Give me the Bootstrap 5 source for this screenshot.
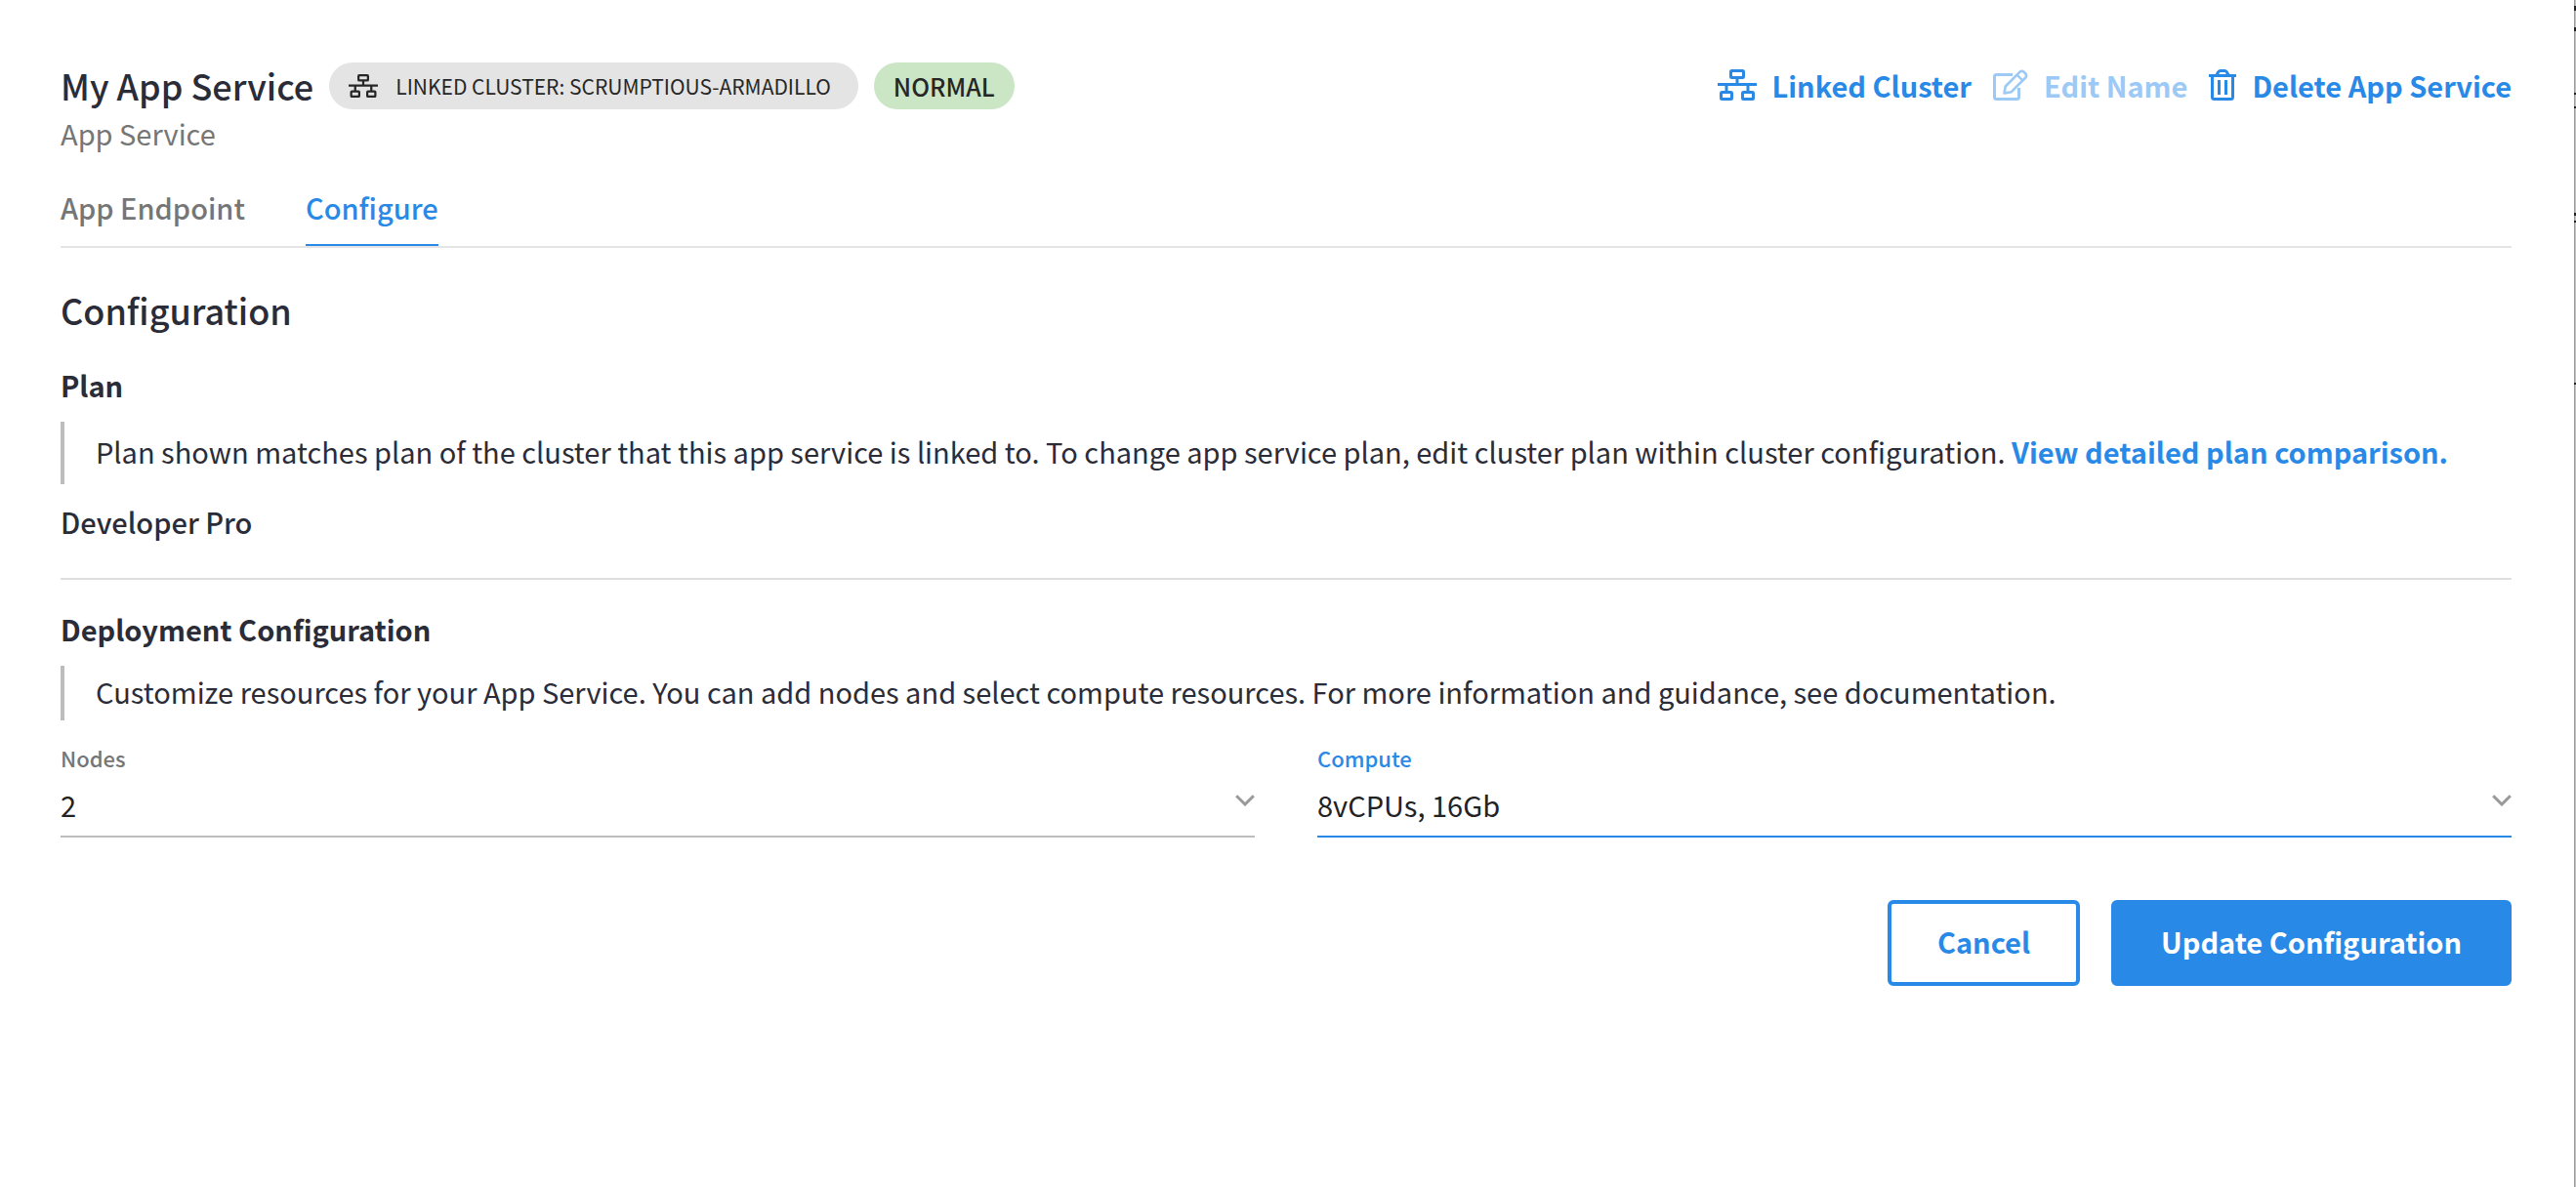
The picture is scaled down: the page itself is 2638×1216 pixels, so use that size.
<!DOCTYPE html>
<html lang="en">
<head>
<meta charset="utf-8">
<meta name="viewport" content="width=device-width, initial-scale=1">
<title>My App Service – Configure</title>
<link href="https://cdn.jsdelivr.net/npm/bootstrap@5.3.0/dist/css/bootstrap.min.css" rel="stylesheet">
<style>
  :root { --brand: #2989e6; --ink: #2a2c38; --muted: #767676; --rule: #e4e4e4; --line: #bdbdbd; }
  body { font-family: "Noto Sans CJK SC", "Noto Sans", sans-serif; font-size: 29px; line-height: 40px; color: var(--ink); background: #fff; }
  .page-body { padding: 64px 64px 64px 62px; }
  /* sliver of the next panel along the window's right side */
  .edge-strip { width: 2px; background: linear-gradient(#222, #222) 0 6px / 2px 5px, linear-gradient(#222, #222) 0 28px / 2px 4px,
      linear-gradient(#222, #222) 0 95px / 2px 2px, linear-gradient(#222, #222) 0 109px / 2px 2px,
      linear-gradient(#222, #222) 0 218px / 2px 3px, linear-gradient(#222, #222) 0 226px / 2px 2px,
      linear-gradient(#222, #222) 0 392px / 2px 2px, linear-gradient(90deg, #9a9a9a 50%, #c4c4c4 50%);
      background-repeat: no-repeat; }
  .page-title, .section-title { font-size: 36px; font-weight: 500; line-height: 46px; margin: 0; }
  .section-title { margin: 40px 0 34px; }
  .tag { height: 48px; border-radius: 24px; color: #262626; }
  .tag-cluster { background: #e4e4e4; font-size: 21px; gap: 18px; margin-left: 16px; padding: 0 28px 0 20px; }
  .tag-status { background: #cae6c5; font-size: 25px; font-weight: 500; margin-left: 16px; padding: 0 20px; }
  .subtitle { line-height: 48px; color: var(--muted); }
  .action-bar { gap: 22px; }
  .action-link { display: flex; align-items: center; gap: 16px; line-height: 46px; font-weight: 700; color: var(--brand); background: none; border: 0; padding: 0; text-decoration: none; }
  .action-link:disabled { color: #9cc9f5; }
  .tab-row { gap: 62px; margin-top: 28px; border-bottom: 2px solid var(--rule); }
  .tab-row .nav-link { padding: 0 0 14px; line-height: 48px; font-weight: 500; color: var(--muted); border-bottom: 2px solid transparent; }
  .tab-row .nav-link.active { color: var(--brand); border-color: var(--brand); }
  .group-title { font-size: 29px; line-height: 40px; font-weight: 700; margin: 0; }
  .plan-name { font-weight: 500; }
  .note { border-left: 4px solid var(--line); padding: 10px 0 14px 32px; margin: 18px 0; }
  .note-short { padding: 6px 0 10px 32px; margin-bottom: 22px; }
  .note a { color: var(--brand); font-weight: 700; text-decoration: none; }
  .divider { border: 0; height: 2px; background: #dfdfdf; opacity: 1; margin: 38px 0 30px; }
  .field-row { display: grid; grid-template-columns: 1fr 1fr; gap: 64px; }
  .field-label { display: block; font-size: 22px; line-height: 32px; font-weight: 500; color: var(--muted); }
  .field-select { font-size: 29px; line-height: 40px; height: 66px; color: #222; border: 0; border-bottom: 2px solid var(--line); border-radius: 0; padding: 12px 40px 12px 0;
      background: url("data:image/svg+xml,%3Csvg xmlns='http://www.w3.org/2000/svg' viewBox='0 0 20 12'%3E%3Cpath d='M1.2 1.2 10 10l8.800-8.800' fill='none' stroke='%23999' stroke-width='3'/%3E%3C/svg%3E") no-repeat right 22px / 20px 12px; }
  .is-current .field-label { color: var(--brand); }
  .is-current .field-select { border-color: var(--brand); }
  .button-row { gap: 32px; margin-top: 64px; }
  .button-row .btn { font-size: 29px; line-height: 40px; font-weight: 700; border: 4px solid var(--brand); border-radius: 6px; padding: 18px 47px 22px; color: var(--brand); background: #fff; }
  .button-row .btn-main { background: var(--brand); color: #fff; }
</style>
</head>
<body>
<svg width="0" height="0" class="position-absolute" aria-hidden="true">
  <symbol id="cluster" viewBox="0 0 40 32">
    <g fill="none" stroke="currentColor" stroke-width="3">
      <rect x="13.500" y="1.500" width="13" height="7" rx="1"/>
      <rect x="3.500" y="23.500" width="11" height="7" rx="1"/>
      <rect x="25.500" y="23.500" width="11" height="7" rx="1"/>
      <path d="M0 15.500h40M20 9v6.500M9 15.500v8M31 15.500v8"/>
    </g>
  </symbol>
</svg>
<div class="d-flex min-vh-100">
  <main class="page-body flex-grow-1">
    <header class="d-flex justify-content-between align-items-start">
      <div>
        <div class="d-flex align-items-start">
          <h1 class="page-title">My App Service</h1>
          <span class="tag tag-cluster d-inline-flex align-items-center"><svg width="30" height="24" aria-hidden="true"><use href="#cluster"/></svg>LINKED CLUSTER: SCRUMPTIOUS-ARMADILLO</span>
          <span class="tag tag-status d-inline-flex align-items-center">NORMAL</span>
        </div>
        <div class="subtitle">App Service</div>
      </div>
      <div class="action-bar d-flex">
        <a class="action-link" href="#"><svg width="40" height="32" aria-hidden="true"><use href="#cluster"/></svg>Linked Cluster</a>
        <button class="action-link" type="button" disabled><svg width="36" height="32" viewBox="0 0 36 32" fill="none" stroke="currentColor" stroke-width="3" stroke-linejoin="round" aria-hidden="true"><path d="M20 5.500H3.500a2 2 0 0 0-2 2v21a2 2 0 0 0 2 2h21a2 2 0 0 0 2-2V19"/><path d="M11.500 24.500l1.200-7L27.500 2.700a2.800 2.800 0 0 1 4 0l1.800 1.800a2.800 2.800 0 0 1 0 4L18.500 23.300z" stroke-width="2.600"/><path d="M24.500 5.700l5.800 5.800" stroke-width="2.400"/></svg>Edit Name</button>
        <button class="action-link" type="button"><svg width="28" height="32" viewBox="0 0 28 32" fill="none" stroke="currentColor" stroke-width="3" aria-hidden="true"><path d="M0 6.500h28M3.500 6.500v22a2 2 0 0 0 2 2h17a2 2 0 0 0 2-2v-22M8 6l1.500-3a2.500 2.500 0 0 1 2.200-1.500h4.600A2.500 2.500 0 0 1 18.500 3L20 6"/><path d="M10.500 11v15M17.500 11v15"/></svg>Delete App Service</button>
      </div>
    </header>
    <nav class="nav tab-row">
      <a class="nav-link" href="#">App Endpoint</a>
      <a class="nav-link active" href="#" aria-current="page">Configure</a>
    </nav>
    <h2 class="section-title">Configuration</h2>
    <section>
      <h3 class="group-title">Plan</h3>
      <p class="note">Plan shown matches plan of the cluster that this app service is linked to. To change app service plan, edit cluster plan within cluster configuration. <a href="#">View detailed plan comparison.</a></p>
      <div class="plan-name">Developer Pro</div>
    </section>
    <hr class="divider">
    <form>
      <h3 class="group-title">Deployment Configuration</h3>
      <p class="note note-short">Customize resources for your App Service. You can add nodes and select compute resources. For more information and guidance, see documentation.</p>
      <div class="field-row">
        <div>
          <label class="field-label" for="nodes">Nodes</label>
          <select class="form-select field-select" id="nodes"><option>2</option></select>
        </div>
        <div class="is-current">
          <label class="field-label" for="compute">Compute</label>
          <select class="form-select field-select" id="compute"><option>8vCPUs, 16Gb</option></select>
        </div>
      </div>
      <div class="button-row d-flex justify-content-end">
        <button class="btn" type="button">Cancel</button>
        <button class="btn btn-main" type="submit">Update Configuration</button>
      </div>
    </form>
  </main>
  <div class="edge-strip flex-shrink-0"></div>
</div>
<script src="https://cdn.jsdelivr.net/npm/bootstrap@5.3.0/dist/js/bootstrap.bundle.min.js"></script>
</body>
</html>
